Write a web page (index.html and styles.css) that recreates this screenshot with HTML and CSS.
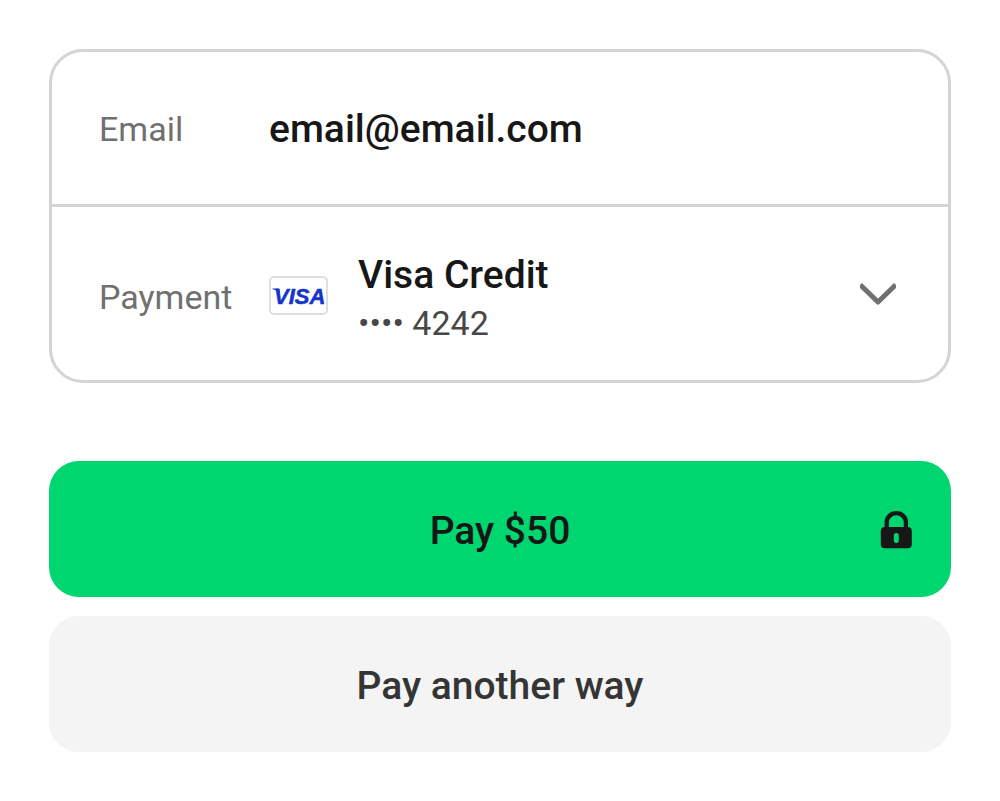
FILE: index.html
```html
<!DOCTYPE html>
<html lang="en">
<head>
<meta charset="utf-8">
<meta name="viewport" content="width=device-width, initial-scale=1">
<title>Pay with saved card</title>
<link rel="stylesheet" href="styles.css">
</head>
<body>
<main class="checkout">
  <section class="details">
    <div class="row row-email">
      <span class="label">Email</span>
      <span class="strong">email@email.com</span>
    </div>
    <button type="button" class="row row-payment" aria-expanded="false">
      <span class="label">Payment</span>
      <span class="method">
        <svg class="card-logo" viewBox="0 0 59 39" aria-hidden="true">
          <rect x="1" y="1" width="57" height="37" rx="4" fill="#fff" stroke="#dfdfdf" stroke-width="2"/>
          <text class="card-brand" x="5" y="28">VISA</text>
          <path d="M3.500 12.600h6.500l1 4.600C9 15 6.500 13.800 3.500 13.200z" fill="#1434cb"/>
        </svg>
        <span class="card-text">
          <span class="strong">Visa Credit</span>
          <span class="number">•••• 4242</span>
        </span>
      </span>
      <svg class="chevron" viewBox="0 0 36 24" aria-hidden="true">
        <path d="M2 4.500L18 20 34 4.500" fill="none" stroke="#707070" stroke-width="5" stroke-linejoin="round" stroke-linecap="square"/>
      </svg>
    </button>
  </section>
  <div class="actions">
    <button type="button" class="btn btn-primary">
      <span class="btn-label">Pay $50</span>
      <svg class="lock" viewBox="0 0 32 40" aria-hidden="true">
        <path d="M6.700 18v-6.800a9.600 9 0 0 1 19.200 0V18" fill="none" stroke="#171717" stroke-width="4.300"/>
        <rect x="0.800" y="16" width="31" height="21.300" rx="4" fill="#171717"/>
        <rect x="13.800" y="22" width="5" height="10" rx="2.500" fill="#00d66f"/>
      </svg>
    </button>
    <button type="button" class="btn btn-secondary">Pay another way</button>
  </div>
</main>
</body>
</html>
```

FILE: styles.css
```css
* {
  box-sizing: border-box;
}

body {
  margin: 0;
  background: #fff;
  color: #171717;
  font-family: Roboto, "Liberation Sans", sans-serif;
}

button {
  margin: 0;
  border: 0;
  background: none;
  color: inherit;
  font: inherit;
  cursor: pointer;
}

.checkout {
  display: flex;
  flex-direction: column;
  gap: 78px;
  padding: 49px;
}

.details {
  border: 3px solid #d4d4d4;
  border-radius: 34px;
}

.row {
  display: grid;
  grid-template-columns: 170px 1fr auto;
  align-items: center;
  width: 100%;
  padding: 42px 52px 35px 47px;
  text-align: left;
}

.row-email {
  padding-top: 51px;
  padding-bottom: 49px;
  border-bottom: 3px solid #d4d4d4;
}

.label {
  color: #707070;
  font-size: 34px;
  line-height: 48px;
}

.strong {
  font-size: 39px;
  font-weight: 500;
  line-height: 52px;
}

.method {
  display: flex;
  align-items: center;
  gap: 30px;
}

.card-logo {
  width: 59px;
  height: 39px;
  margin-bottom: 3px;
}

.card-brand {
  fill: #1434cb;
  stroke: #1434cb;
  stroke-width: 0.5px;
  font: italic 700 22px "Liberation Sans", sans-serif;
}

.card-text {
  display: flex;
  flex-direction: column;
}

.number {
  color: #474747;
  font-size: 34px;
  line-height: 44px;
}

.chevron {
  width: 36px;
  height: 24px;
  margin-bottom: 6px;
}

.actions {
  display: flex;
  flex-direction: column;
  gap: 19px;
}

.btn {
  width: 100%;
  padding: 46px 39px 42px;
  border-radius: 30px;
  font-size: 39px;
  font-weight: 500;
  line-height: 48px;
  text-align: center;
}

.btn-primary {
  display: grid;
  grid-template-columns: 32px 1fr 32px;
  align-items: center;
  background: #00d66f;
}

.btn-label {
  grid-column: 2;
}

.lock {
  width: 32px;
  height: 40px;
}

.btn-secondary {
  background: #f4f4f4;
  color: #353535;
}
```
